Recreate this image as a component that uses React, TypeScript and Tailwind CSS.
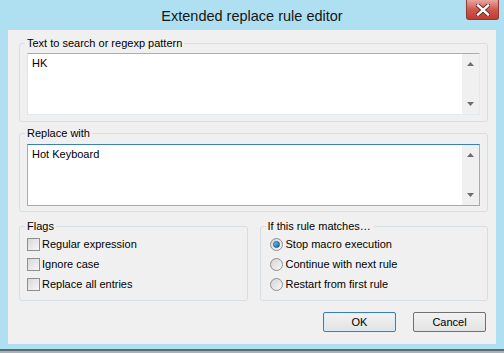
import React from "react";

function ScrollArrow({ down }: { down?: boolean }) {
  return (
    <div className="h-[20px] w-full flex items-center justify-center">
      <svg width="7" height="4" viewBox="0 0 7 4">
        {down ? (
          <polygon points="0,0 7,0 3.5,4" fill="#6d6d6d" />
        ) : (
          <polygon points="3.5,0 7,4 0,4" fill="#6d6d6d" />
        )}
      </svg>
    </div>
  );
}

function TextBox({ value, focused }: { value: string; focused?: boolean }) {
  return (
    <div
      className={
        "h-[62px] flex bg-white border " +
        (focused
          ? "border-[#7eb4ea] border-t-[#3c7fb1]"
          : "border-[#e3e9ef] border-t-[#abadb3] border-l-[#e2e3ea]")
      }
    >
      <div className="flex-1 pl-[4px] pt-[3px] text-black">{value}</div>
      <div className="w-[17px] bg-[#f0f0f0] flex flex-col justify-between">
        <ScrollArrow />
        <ScrollArrow down />
      </div>
    </div>
  );
}

function Group({
  label,
  className,
  children,
}: {
  label: string;
  className?: string;
  children: React.ReactNode;
}) {
  return (
    <fieldset
      className={
        "border border-[#d5dfe5] rounded-[3px] px-[7px] " + (className ?? "")
      }
    >
      <legend className="px-[2px] -ml-[2px] leading-[13px]">{label}</legend>
      {children}
    </fieldset>
  );
}

function Checkbox({ label }: { label: string }) {
  return (
    <div className="h-[20px] flex items-center gap-[2px]">
      <div className="w-[13px] h-[13px] border border-[#8e8f8f] bg-gradient-to-br from-[#d8d8d8] to-[#f7f7f7] shrink-0" />
      <span>{label}</span>
    </div>
  );
}

function Radio({ label, checked }: { label: string; checked?: boolean }) {
  return (
    <div className="h-[20px] flex items-center gap-[3px] ml-[2px]">
      <div className="w-[13px] h-[13px] rounded-full border border-[#8e8f8f] bg-gradient-to-br from-[#d4d4d4] to-[#f8f8f8] shrink-0 flex items-center justify-center">
        {checked && (
          <div className="w-[7px] h-[7px] rounded-full bg-gradient-to-br from-[#86c6f0] to-[#0f5e9e] border border-[#1d5b8c]" />
        )}
      </div>
      <span>{label}</span>
    </div>
  );
}

export default function App() {
  return (
    <div className="w-[504px] h-[353px] flex flex-col bg-[#afe0f2] font-['Liberation_Sans',Arial,sans-serif] text-[11px] leading-[13px] text-black overflow-hidden">
      <div className="relative h-[30px] shrink-0 flex items-center justify-center">
        <span className="text-[14.5px] leading-[18px] text-[#161616] pt-[1px]">
          Extended replace rule editor
        </span>
        <div className="absolute top-0 right-[5px] w-[33px] h-[20px] rounded-b-[3px] border border-t-0 border-[#8f3a34] bg-gradient-to-b from-[#e8a59f] via-[#d0574f] to-[#c13a31] flex items-center justify-center">
          <svg width="14" height="12" viewBox="0 0 14 12">
            <path
              d="M2 1.5 L12 10.5 M12 1.5 L2 10.5"
              stroke="#5a2420"
              strokeWidth="4.2"
              strokeLinecap="square"
            />
            <path
              d="M2 1.5 L12 10.5 M12 1.5 L2 10.5"
              stroke="#ffffff"
              strokeWidth="2.4"
              strokeLinecap="square"
            />
          </svg>
        </div>
      </div>

      <div className="mx-[8px] h-[314px] shrink-0 bg-[#f0f0f0] pl-[11px] pr-[8px] pt-[7px] flex flex-col">
        <Group label="Text to search or regexp pattern" className="pt-[3px] pb-[6px]">
          <TextBox value="HK" />
        </Group>
        <Group label="Replace with" className="mt-[5px] pt-[4px] pb-[5px]">
          <TextBox value="Hot Keyboard" focused />
        </Group>

        <div className="mt-[8px] grid grid-cols-2 gap-[12px]">
          <Group label="Flags" className="h-[81px] pt-[1px]">
            <Checkbox label="Regular expression" />
            <Checkbox label="Ignore case" />
            <Checkbox label="Replace all entries" />
          </Group>
          <Group label="If this rule matches…" className="h-[81px] pt-[1px]">
            <Radio label="Stop macro execution" checked />
            <Radio label="Continue with next rule" />
            <Radio label="Restart from first rule" />
          </Group>
        </div>

        <div className="mt-[11px] flex justify-end gap-[17px] pr-[2px]">
          <button className="w-[73px] h-[20px] rounded-[2px] border border-[#3c7fb1] bg-gradient-to-b from-[#f2f2f2] to-[#e3e3e3] shadow-[inset_0_0_0_1px_#d8ecfa] text-[11px] leading-[13px]">
            OK
          </button>
          <button className="w-[73px] h-[20px] rounded-[2px] border border-[#707070] bg-gradient-to-b from-[#f2f2f2] to-[#e3e3e3] text-[11px] leading-[13px]">
            Cancel
          </button>
        </div>
      </div>

      <div className="h-[5px] shrink-0" />
      <div className="h-[2px] shrink-0 bg-[#5d6a70]" />
      <div className="flex-1 bg-[#a9b2b6]" />
    </div>
  );
}
